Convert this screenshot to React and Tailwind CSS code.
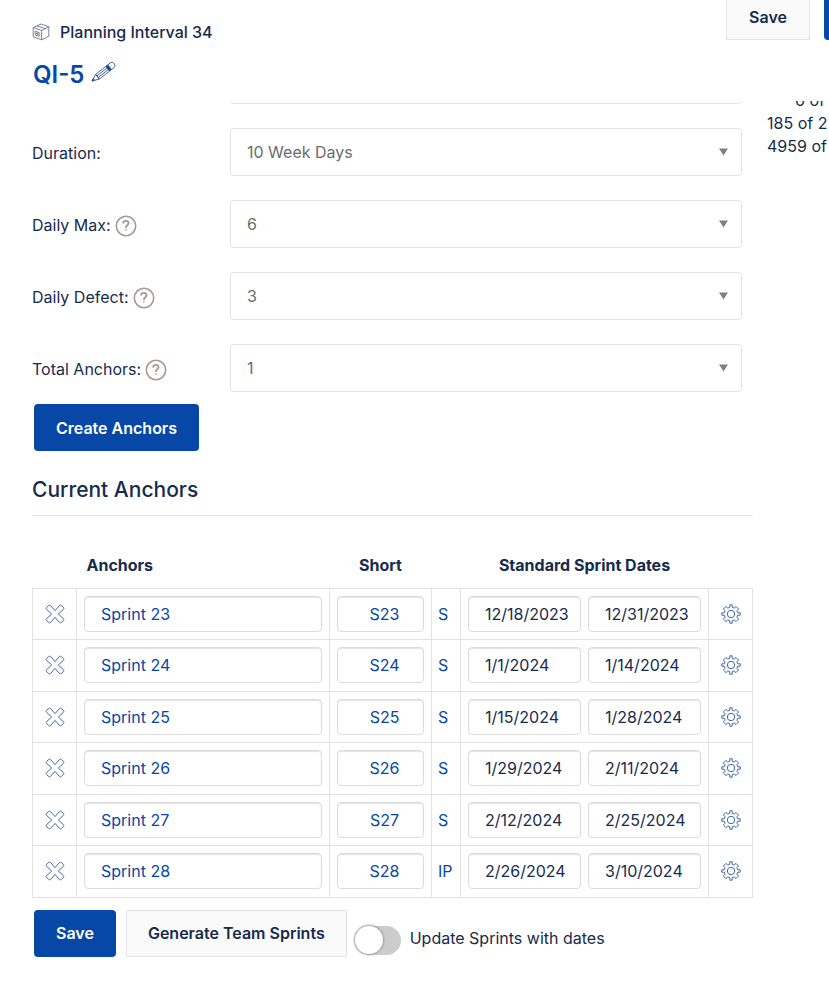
// src/components/PlanningInterval.jsx
import React, { useState } from "react";

const FIELDS = [
  { id: "duration", label: "Duration:", value: "10 Week Days", help: false },
  { id: "daily-max", label: "Daily Max:", value: "6", help: true },
  { id: "daily-defect", label: "Daily Defect:", value: "3", help: true },
  { id: "total-anchors", label: "Total Anchors:", value: "1", help: true },
];

const SPRINTS = [
  { name: "Sprint 23", short: "S23", type: "S", start: "12/18/2023", end: "12/31/2023" },
  { name: "Sprint 24", short: "S24", type: "S", start: "1/1/2024", end: "1/14/2024" },
  { name: "Sprint 25", short: "S25", type: "S", start: "1/15/2024", end: "1/28/2024" },
  { name: "Sprint 26", short: "S26", type: "S", start: "1/29/2024", end: "2/11/2024" },
  { name: "Sprint 27", short: "S27", type: "S", start: "2/12/2024", end: "2/25/2024" },
  { name: "Sprint 28", short: "S28", type: "IP", start: "2/26/2024", end: "3/10/2024" },
];

function BoxIcon() {
  return (
    <svg viewBox="0 0 18 18" className="w-[18px] h-[18px]" fill="none" stroke="#5f6678" strokeWidth="0.8" strokeLinejoin="round">
      <path d="M1.2 4.6 9 1 16.8 3.8v9.4L9.6 16.8 1.2 13.8Z" />
      <path d="M1.2 4.6 9.6 7.4 16.8 3.8M9.6 7.4v9.4M5 2.9l8.3 2.7" />
      <path d="M3.2 8.2l4 1.3v3.8l-4-1.2ZM4.7 9.8l1.2.4v1.3l-1.2-.4Z" />
    </svg>
  );
}

function PencilIcon() {
  return (
    <svg viewBox="0 0 26 22" className="w-[26px] h-[22px]" fill="none" stroke="#2c4f8c" strokeWidth="0.8" strokeLinejoin="round">
      <g transform="translate(1 20) rotate(-38)">
        <path d="M0 0 7-3v6Z" />
        <path d="M0 0 2.4-1v2Z" fill="#2c4f8c" />
        <path d="M7-3h13v6H7ZM7-1h13M7 1h13" />
        <path d="M20-3h2.4v6H20Z" fill="#0747a6" />
        <path d="M22.4-3h3.4Q28-3 28-.8V.8Q28 3 25.8 3h-3.4" />
      </g>
    </svg>
  );
}

function HelpIcon() {
  return (
    <svg viewBox="0 0 22 22" className="w-[22px] h-[22px] mt-[3px]" fill="none" stroke="#a89898" strokeLinecap="round">
      <circle cx="11" cy="11" r="9.7" strokeWidth="1.6" />
      <path d="M8.2 7.8C8.8 5 13.9 5.4 13.5 8.4 13.2 10.4 11.2 10 11 12.2" strokeWidth="1.9" />
      <path d="M10.9 14.8v.1" strokeWidth="1.5" />
    </svg>
  );
}

function CrossIcon() {
  return (
    <svg viewBox="0 0 20 20" className="w-5 h-5" fill="none" stroke="#4368a8" strokeWidth="1" strokeLinejoin="round">
      <path d="M10 6.6 14.4 1.6Q15.4.6 16.4 1.6L18.4 3.4Q19.4 4.4 18.4 5.4L13.3 10 18.4 14.6Q19.4 15.6 18.4 16.6L16.4 18.4Q15.4 19.4 14.4 18.4L10 13.4 5.6 18.4Q4.6 19.4 3.6 18.4L1.6 16.6Q.6 15.6 1.6 14.6L6.7 10 1.6 5.4Q.6 4.4 1.6 3.4L3.6 1.6Q4.6.6 5.6 1.6Z" />
    </svg>
  );
}

function GearIcon() {
  return (
    <svg viewBox="0 0 20 20" className="w-5 h-5" fill="none" stroke="#3f68ac" strokeWidth="1" strokeLinejoin="round">
      <path d="M8.8.8h2.4v2.5l2 .8L15 2.4 17.6 5 15.9 6.8l.8 2h2.5v2.4h-2.5l-.8 2L17.6 15 15 17.6l-1.8-1.7-2 .8v2.5H8.8v-2.5l-2-.8L5 17.6 2.4 15l1.7-1.8-.8-2H.8V8.8h2.5l.8-2L2.4 5 5 2.4l1.8 1.7 2-.8Z" />
      <circle cx="10" cy="10" r="3.7" />
    </svg>
  );
}

function SelectBox({ id, value, label }) {
  return (
    <div className="relative">
      <select
        id={id}
        aria-label={label}
        className="appearance-none block w-full h-12 pl-4 pr-8 border border-[#e2e2e2] rounded bg-white text-base text-[#6b6b6b]"
      >
        <option>{value}</option>
      </select>
      <svg viewBox="0 0 10 8" className="absolute right-[14px] top-5 w-[9px] h-2 pointer-events-none" fill="#808080">
        <path d="M0 0h10L5 8Z" />
      </svg>
    </div>
  );
}

function CellInput({ className, ...props }) {
  return (
    <input
      type="text"
      className={`block w-full min-w-0 h-9 border border-[#dcdcdc] rounded bg-white shadow-[inset_0_1px_1px_#e4e4e4] ${className}`}
      {...props}
    />
  );
}

export default function App() {
  const [sprints, setSprints] = useState(SPRINTS);
  const [withDates, setWithDates] = useState(false);

  const update = (index, key) => (e) => {
    const value = e.target.value;
    setSprints((prev) => prev.map((s, i) => (i === index ? { ...s, [key]: value } : s)));
  };

  return (
    <div className="min-h-screen overflow-hidden bg-white font-['Inter',sans-serif] text-base text-[#172b4d]">
      <header className="flex items-start justify-between h-[101px] pl-8">
        <div className="pt-5">
          <div className="flex items-center gap-[10px] h-6 font-medium">
            <BoxIcon />
            <span>Planning Interval 34</span>
          </div>
          <div className="flex items-center gap-[7px] h-8 mt-[15px] pl-px text-[#0747a6]">
            <h1 className="text-2xl font-semibold">QI-5</h1>
            <button type="button" aria-label="Edit" className="pb-[6px]">
              <PencilIcon />
            </button>
          </div>
        </div>
        <div className="flex gap-[14px]">
          <button type="button" className="h-10 px-[22px] pb-[6px] border border-t-0 border-[#e4e4e4] bg-[#fafafa] font-semibold">
            Save
          </button>
          <button type="button" aria-label="Close" className="w-20 h-10 -mr-[75px] rounded-b-sm bg-[#0747a6]" />
        </div>
      </header>

      <div className="flex overflow-hidden">
        <main className="flex-1 min-w-0 pl-8">
          <form className="pr-[11px]" onSubmit={(e) => e.preventDefault()}>
            {/* scrolled under the header */}
            <div className="-mt-[45px] mb-6 pl-[198px]">
              <SelectBox id="start" label="Start" value="" />
            </div>
            <div className="flex flex-col gap-6">
              {FIELDS.map((f) => (
                <div key={f.id} className="grid grid-cols-[198px_1fr] items-center">
                  <label htmlFor={f.id} className="flex items-center gap-1 pt-px">
                    {f.label}
                    {f.help && <HelpIcon />}
                  </label>
                  <SelectBox id={f.id} value={f.value} />
                </div>
              ))}
            </div>
            <button type="button" className="h-[47px] mt-3 ml-[2px] px-[22px] rounded-sm bg-[#0747a6] text-white font-semibold">
              Create Anchors
            </button>
          </form>

          <h2 className="mt-6 pb-[10px] border-b border-[#e4e4e4] text-[21px] leading-[30px] font-medium">
            Current Anchors
          </h2>

          <table className="w-full mt-7 table-fixed border-collapse">
            <colgroup>
              <col className="w-[44px]" />
              <col />
              <col className="w-[102px]" />
              <col className="w-[29px]" />
              <col className="w-[248px]" />
              <col className="w-[44px]" />
            </colgroup>
            <thead>
              <tr className="h-11 [&>th]:pb-[2px] [&>th]:font-bold">
                <td />
                <th className="pl-[10px] text-left">Anchors</th>
                <th>Short</th>
                <td />
                <th>Standard Sprint Dates</th>
                <td />
              </tr>
            </thead>
            <tbody>
              {sprints.map((s, i) => (
                <tr key={i} className="odd:h-[51px] even:h-[52px] [&>td]:border [&>td]:border-[#e2e2e2]">
                  <td>
                    <button type="button" aria-label={`Delete ${s.name}`} className="block mx-auto">
                      <CrossIcon />
                    </button>
                  </td>
                  <td className="px-[7px]">
                    <CellInput aria-label="Anchor" value={s.name} onChange={update(i, "name")} className="px-4 text-[#0747a6]" />
                  </td>
                  <td className="px-[7px]">
                    <CellInput aria-label="Short" value={s.short} onChange={update(i, "short")} className="pl-2 text-center text-[#0747a6]" />
                  </td>
                  <td className="pl-[6px] text-[#0747a6]">{s.type}</td>
                  <td className="px-[7px]">
                    <div className="flex gap-[7px]">
                      <CellInput aria-label="Start date" value={s.start} onChange={update(i, "start")} className="pl-4" />
                      <CellInput aria-label="End date" value={s.end} onChange={update(i, "end")} className="pl-4" />
                    </div>
                  </td>
                  <td>
                    <button type="button" aria-label={`Settings ${s.name}`} className="block mx-auto">
                      <GearIcon />
                    </button>
                  </td>
                </tr>
              ))}
            </tbody>
          </table>

          <div className="flex items-start mt-3 pl-[2px]">
            <button type="button" className="h-[47px] px-[22px] rounded-sm bg-[#0747a6] text-white font-semibold">
              Save
            </button>
            <button type="button" className="h-[47px] ml-[10px] px-[21px] border border-[#e4e4e4] bg-[#fafafa] font-semibold">
              Generate Team Sprints
            </button>
            <label className="flex items-start gap-[9px] mt-4 ml-2">
              <input
                type="checkbox"
                role="switch"
                checked={withDates}
                onChange={(e) => setWithDates(e.target.checked)}
                className="appearance-none flex items-center w-[46px] h-[29px] rounded-full bg-[#cccccc] checked:bg-[#0747a6] before:block before:w-7 before:h-7 before:rounded-full before:bg-white before:shadow-[0_0_2px_1px_#999] checked:before:ml-[18px]"
              />
              <span>Update Sprints with dates</span>
            </label>
          </div>
        </main>

        <aside className="w-[62px] ml-[14px] -mt-3 shrink-0 overflow-hidden whitespace-nowrap leading-[23px]">
          <p className="pl-7">6 of</p>
          <p>185 of 2</p>
          <p>4959 of</p>
        </aside>
      </div>
    </div>
  );
}
